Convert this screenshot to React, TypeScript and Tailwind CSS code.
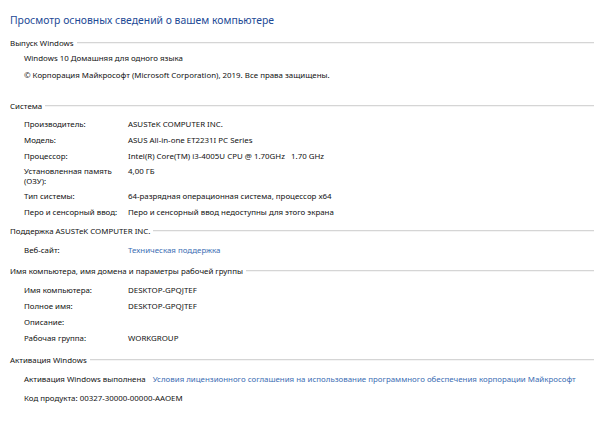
import React from 'react';

const font = { fontFamily: '"Noto Sans", "Liberation Sans", sans-serif' };

function SectionTitle({ title, className }: { title: string; className?: string }) {
  return (
    <div className={`flex h-3 items-center pl-[10px] pr-[3px] ${className ?? ''}`}>
      <span className="whitespace-nowrap text-[7.9px] leading-3 text-[#111]">{title}</span>
      <div className="ml-[3px] flex flex-1 flex-col">
        <div className="h-px bg-[#d5d5d5]" />
        <div className="h-px bg-[#f4f4f4]" />
      </div>
    </div>
  );
}

function Row({ label, value, link, className }: { label: React.ReactNode; value?: string; link?: boolean; className?: string }) {
  return (
    <div className={`flex whitespace-pre pl-6 text-[7.9px] leading-4 text-[#111] ${className ?? ''}`}>
      <div className="w-[104px] shrink-0">{label}</div>
      <div className={link ? 'text-[#3b6db3]' : ''}>{value}</div>
    </div>
  );
}

export default function App() {
  return (
    <div className="h-[433px] w-[597px] overflow-hidden bg-white" style={font}>
      <h1 className="pl-[10px] pt-3 text-[10.4px] leading-4 font-normal text-[#1d4a96]">
        Просмотр основных сведений о вашем компьютере
      </h1>

      <SectionTitle title="Выпуск Windows" className="mt-[9px]" />
      <div className="mt-px pl-6 text-[7.9px] leading-4 text-[#111]">Windows 10 Домашняя для одного языка</div>
      <div className="mt-px pl-6 text-[7.9px] leading-4 text-[#111]">
        © Корпорация Майкрософт (Microsoft Corporation), 2019. Все права защищены.
      </div>

      <SectionTitle title="Система" className="mt-[17px]" />
      <Row label="Производитель:" value="ASUSTeK COMPUTER INC." className="mt-1" />
      <Row label="Модель:" value="ASUS All-in-one ET2231I PC Series" />
      <Row label="Процессор:" value="Intel(R) Core(TM) i3-4005U CPU @ 1.70GHz   1.70 GHz" />
      <div className="flex py-[2px] pl-6 text-[7.9px] leading-[10px] text-[#111]">
        <div className="w-[104px] shrink-0">
          Установленная память
          <br />
          (ОЗУ):
        </div>
        <div>4,00 ГБ</div>
      </div>
      <Row label="Тип системы:" value="64-разрядная операционная система, процессор x64" />
      <Row label="Перо и сенсорный ввод:" value="Перо и сенсорный ввод недоступны для этого экрана" />

      <SectionTitle title="Поддержка ASUSTeK COMPUTER INC." className="mt-[5px]" />
      <Row label="Веб-сайт:" value="Техническая поддержка" link className="mt-[5px]" />

      <SectionTitle title="Имя компьютера, имя домена и параметры рабочей группы" className="mt-[7px]" />
      <Row label="Имя компьютера:" value="DESKTOP-GPQJTEF" className="mt-[5px]" />
      <Row label="Полное имя:" value="DESKTOP-GPQJTEF" />
      <Row label="Описание:" />
      <Row label="Рабочая группа:" value="WORKGROUP" />

      <SectionTitle title="Активация Windows" className="mt-2" />
      <div className="mt-[5px] flex whitespace-nowrap pl-6 text-[7.9px] leading-4 text-[#111]">
        <span>Активация Windows выполнена</span>
        <span className="ml-[7px] text-[#3b6db3]">
          Условия лицензионного соглашения на использование программного обеспечения корпорации Майкрософт
        </span>
      </div>
      <div className="mt-[3px] pl-6 text-[7.9px] leading-4 text-[#111]">Код продукта: 00327-30000-00000-AAOEM</div>
    </div>
  );
}
